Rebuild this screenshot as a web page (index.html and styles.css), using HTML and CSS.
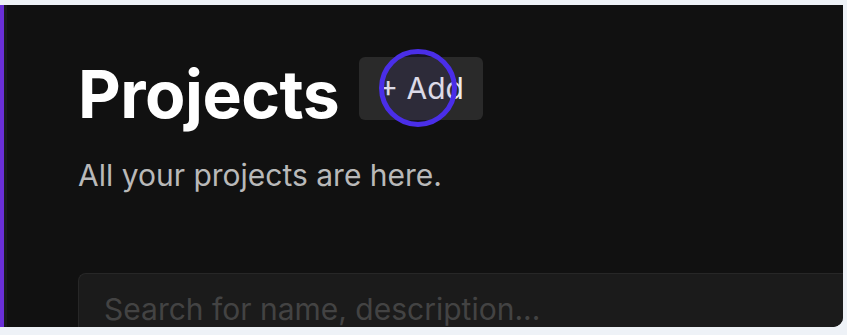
FILE: index.html
```html
<!DOCTYPE html>
<html>
<head>
<meta charset="utf-8">
<link rel="stylesheet" href="styles.css">
</head>
<body>
<div class="panel">
  <div class="rail"></div>
  <main class="main">
    <div class="head">
      <h1 class="title">Projects</h1>
      <button class="add">+ Add</button>
      <span class="ring"></span>
    </div>
    <p class="sub">All your projects are here.</p>
    <div class="search">Search for name, description...</div>
  </main>
</div>
</body>
</html>
```
FILE: styles.css
```css
* { box-sizing: border-box; }
html, body { margin: 0; padding: 0; }
body {
  background: #eef2f7;
  width: 847px;
  height: 335px;
  overflow: hidden;
  font-family: Inter, "Noto Sans", sans-serif;
}
.panel {
  margin-top: 5px;
  width: 843px;
  height: 322px;
  background: #111111;
  border-bottom-right-radius: 10px;
  overflow: hidden;
  display: flex;
}
.rail {
  width: 7px;
  flex: none;
  background: #1a1a1c;
  border-left: 4px solid #6a2fd8;
}
.main {
  flex: 1;
  padding-left: 71px;
  padding-top: 50px;
}
.head {
  display: flex;
  align-items: center;
  gap: 20px;
  position: relative;
}
.title {
  margin: 0;
  font-size: 66px;
  font-weight: 700;
  line-height: 78px;
  color: #ffffff;
  letter-spacing: -0.5px;
}
.add {
  margin-top: -12px;
  height: 63px;
  padding: 0 19px;
  border: none;
  border-radius: 6px;
  background: #2a2a2a;
  color: #ececec;
  font-family: Inter, "Noto Sans", sans-serif;
  font-size: 30px;
  font-weight: 400;
}
.ring {
  position: absolute;
  left: 301px;
  top: -6px;
  width: 78px;
  height: 78px;
  border: 5px solid #4a2ee8;
  border-radius: 50%;
  background: rgba(80, 60, 200, 0.10);
}
.sub {
  margin: 24px 0 0;
  font-size: 30px;
  line-height: 36px;
  color: #b9b9b9;
}
.search {
  margin-top: 80px;
  height: 70px;
  border: 1px solid #272727;
  border-right: none;
  border-radius: 8px 0 0 0;
  background: #1b1b1b;
  padding: 17px 0 0 25px;
  font-size: 30px;
  color: #434343;
}
```
